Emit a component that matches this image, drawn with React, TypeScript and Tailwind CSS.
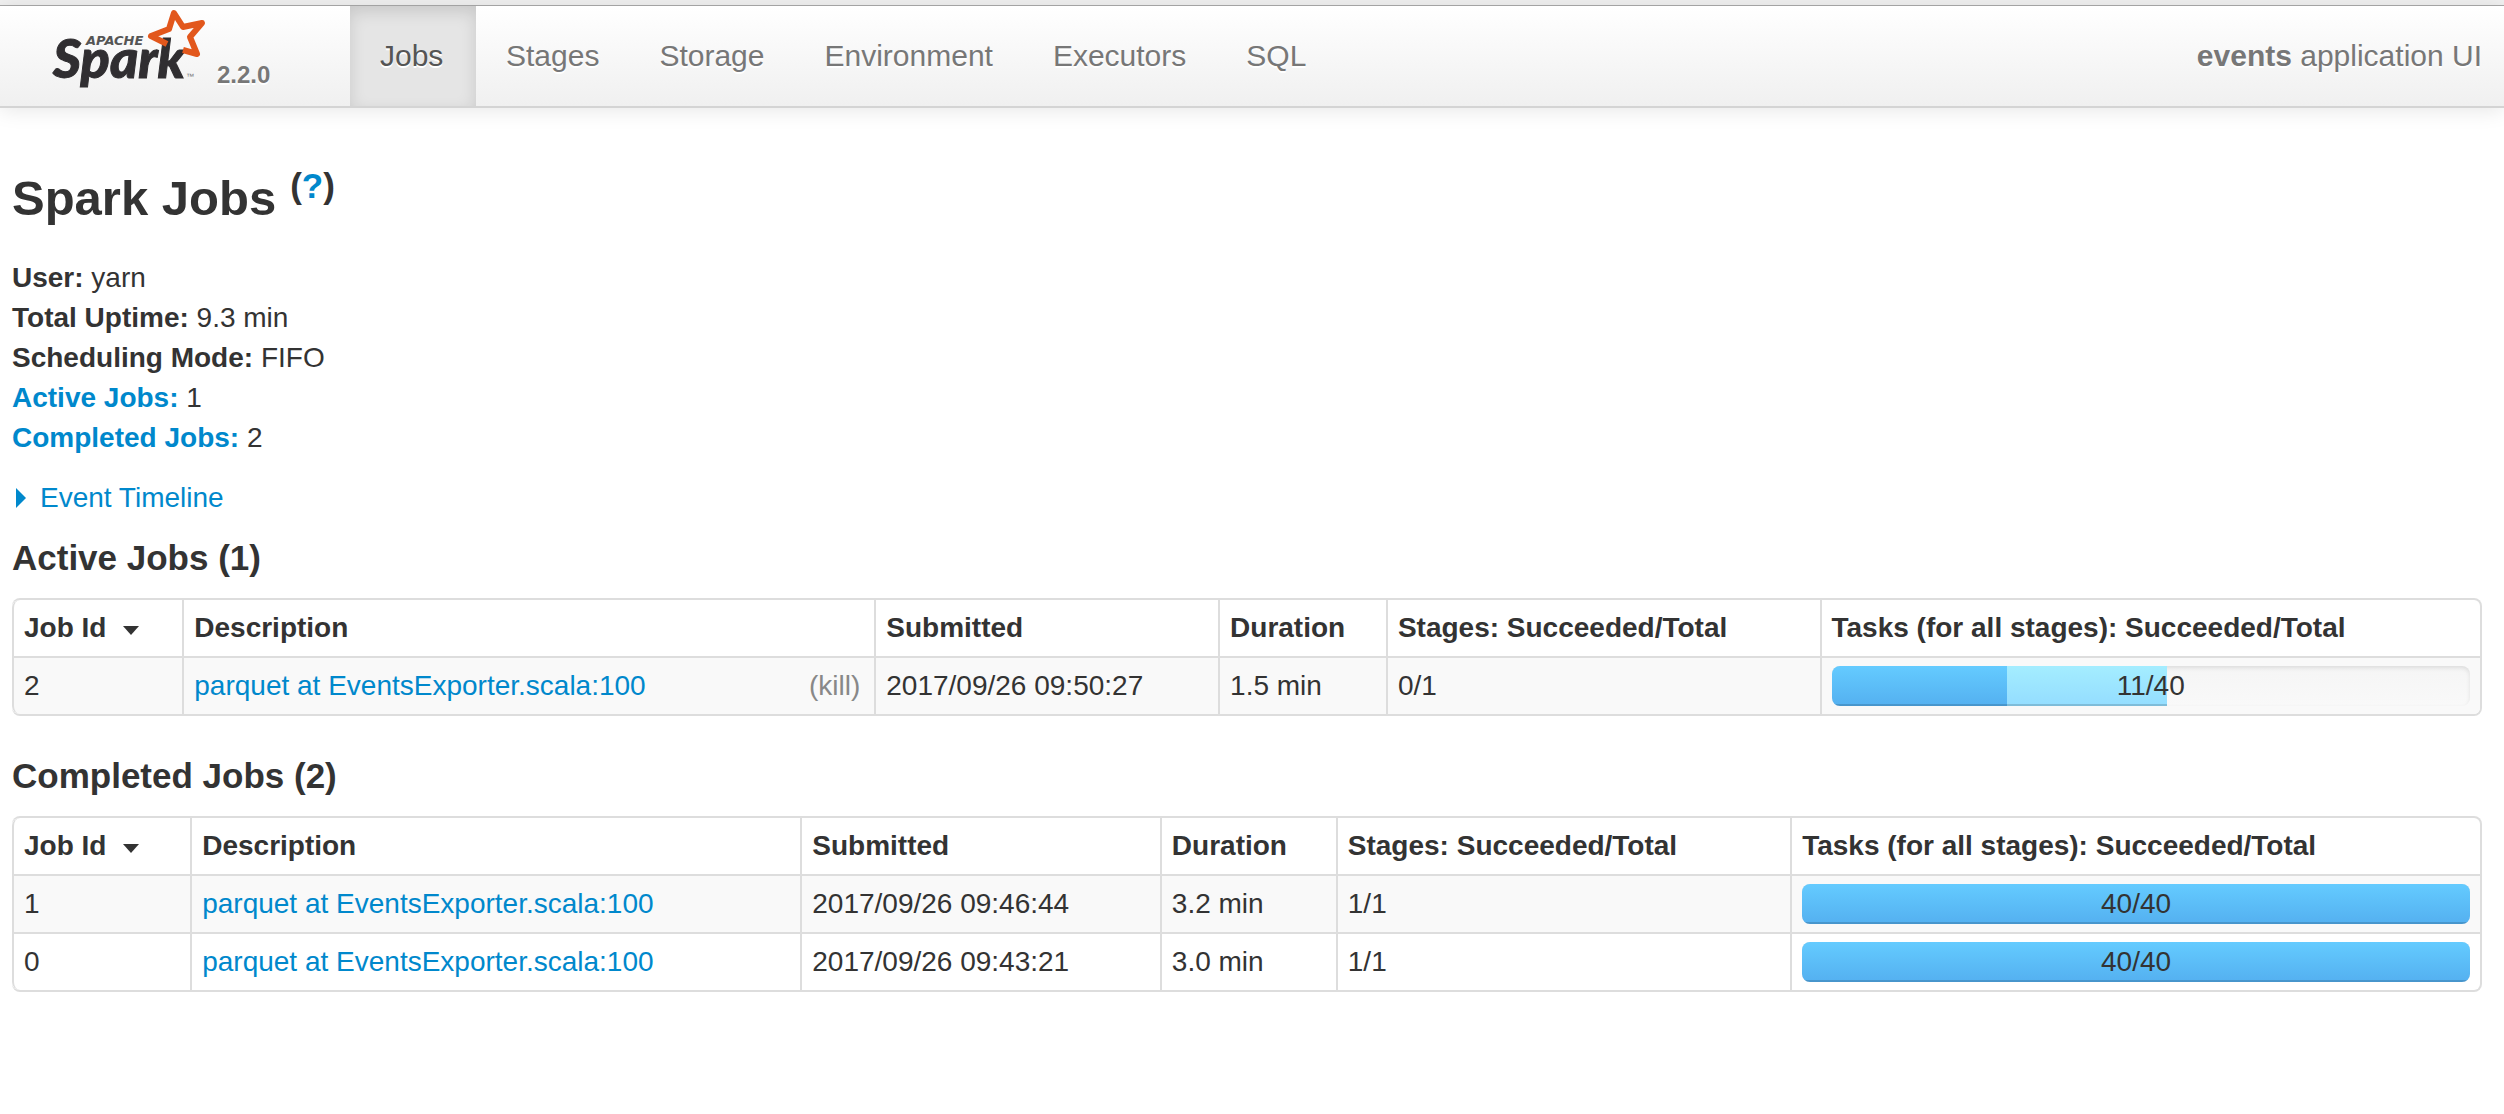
import React from "react";
import clsx from "clsx";

interface Job {
  id: number;
  description: string;
  submitted: string;
  duration: string;
  stages: string;
  succeeded: number;
  running: number;
  total: number;
  killable?: boolean;
}

const tabs = ["Jobs", "Stages", "Storage", "Environment", "Executors", "SQL"];

const activeJobs: Job[] = [
  {
    id: 2,
    description: "parquet at EventsExporter.scala:100",
    submitted: "2017/09/26 09:50:27",
    duration: "1.5 min",
    stages: "0/1",
    succeeded: 11,
    running: 10,
    total: 40,
    killable: true,
  },
];

const completedJobs: Job[] = [
  {
    id: 1,
    description: "parquet at EventsExporter.scala:100",
    submitted: "2017/09/26 09:46:44",
    duration: "3.2 min",
    stages: "1/1",
    succeeded: 40,
    running: 0,
    total: 40,
  },
  {
    id: 0,
    description: "parquet at EventsExporter.scala:100",
    submitted: "2017/09/26 09:43:21",
    duration: "3.0 min",
    stages: "1/1",
    succeeded: 40,
    running: 0,
    total: 40,
  },
];

// Column widths, in the order of the header cells. The last column takes the rest.
const activeCols = ["w-[6.9%]", "w-[28.04%]", "w-[13.93%]", "w-[6.8%]", "w-[17.57%]", ""];
const completedCols = ["w-[7.22%]", "w-[24.72%]", "w-[14.57%]", "w-[7.13%]", "w-[18.41%]", ""];

function SparkLogo() {
  return (
    <svg
      width="150"
      height="90"
      viewBox="0 0 150 90"
      role="img"
      aria-label="Apache Spark"
      className="overflow-visible [text-shadow:none]"
    >
      <text
        x="34"
        y="39"
        fill="#555"
        fontSize="13"
        fontWeight="700"
        fontStyle="italic"
        fontFamily="'DejaVu Sans', sans-serif"
      >
        APACHE
      </text>
      <text
        x="1"
        y="72"
        fill="#302e31"
        stroke="#302e31"
        strokeWidth="1"
        fontSize="54"
        fontWeight="900"
        fontStyle="italic"
        fontFamily="Lato, sans-serif"
      >
        Spark
      </text>
      <text x="134" y="73" fill="#777" fontSize="8" fontFamily="'Liberation Sans', sans-serif">
        ™
      </text>
      <path
        d="M115 38 L99 30 L117 23 L122 7 L131 21 L150 17 L138 31 L145 48 L131 44"
        fill="none"
        stroke="#e2571c"
        strokeWidth="6"
        strokeLinejoin="round"
      />
    </svg>
  );
}

function Navbar() {
  return (
    <header className="border-t border-[#aaa] mt-[5px]">
      <div className="flex items-stretch justify-between pr-[22px] bg-linear-to-b from-white to-[#f0f0f0] border-b-2 border-[#d4d4d4] shadow-[0_2px_20px_rgba(0,0,0,0.1)] text-[30px] leading-10 text-[#777] [text-shadow:0_2px_0_#fff]">
        <div className="flex">
          <a href="#" className="flex w-[350px] shrink-0 pl-[52px]">
            <SparkLogo />
            <span className="pt-[49px] pl-[15px] text-2xl leading-10 font-bold">2.2.0</span>
          </a>
          <nav className="flex">
            {tabs.map((tab) => (
              <a
                key={tab}
                href="#"
                className={clsx(
                  "min-w-[126px] px-[30px] py-[30px]",
                  tab === "Jobs" &&
                    "bg-[#e5e5e5] text-[#555] shadow-[inset_0_6px_16px_rgba(0,0,0,0.125)]"
                )}
              >
                {tab}
              </a>
            ))}
          </nav>
        </div>
        <p className="py-[30px]">
          <strong>events</strong> application UI
        </p>
      </div>
    </header>
  );
}

function ProgressBar({ job }: { job: Job }) {
  const donePct = (job.succeeded / job.total) * 100;
  const runningPct = (job.running / job.total) * 100;

  return (
    <div className="relative flex h-10 overflow-hidden rounded-lg bg-linear-to-b from-[#f5f5f5] to-[#f9f9f9] shadow-[inset_0_2px_4px_rgba(0,0,0,0.1)]">
      <div
        className="bg-linear-to-b from-[#64cbff] to-[#54b0f0] shadow-[inset_0_-2px_0_rgba(0,0,0,0.15)]"
        style={{ width: `${donePct}%` }}
      />
      <div
        className="bg-linear-to-b from-[#a4edff] to-[#94ddff] shadow-[inset_0_-2px_0_rgba(0,0,0,0.15)]"
        style={{ width: `${runningPct}%` }}
      />
      <span className="absolute inset-0 text-center">
        {job.succeeded}/{job.total}
      </span>
    </div>
  );
}

function JobTable({ jobs, cols }: { jobs: Job[]; cols: string[] }) {
  const cell = "border-l-2 border-[#ddd] px-[10px] py-2";

  return (
    <table className="w-full table-fixed border-separate border-spacing-0 overflow-hidden rounded-lg border-2 border-l-0 border-[#ddd] text-left">
      <colgroup>
        {cols.map((width, i) => (
          <col key={i} className={width} />
        ))}
      </colgroup>
      <thead>
        <tr>
          <th className={clsx(cell, "rounded-tl-lg")}>
            <span className="flex items-center gap-[17px]">
              Job Id
              <svg width="16" height="9" viewBox="0 0 16 9" className="mt-1" aria-hidden="true">
                <path d="M0 0H16L8 9Z" fill="#333" />
              </svg>
            </span>
          </th>
          <th className={cell}>Description</th>
          <th className={cell}>Submitted</th>
          <th className={cell}>Duration</th>
          <th className={cell}>Stages: Succeeded/Total</th>
          <th className={cell}>Tasks (for all stages): Succeeded/Total</th>
        </tr>
      </thead>
      <tbody>
        {jobs.map((job, i) => {
          const td = clsx(cell, "border-t-2", i % 2 === 0 && "bg-[#f9f9f9]");
          return (
            <tr key={job.id}>
              <td className={clsx(td, i === jobs.length - 1 && "rounded-bl-lg")}>{job.id}</td>
              <td className={td}>
                <div className="flex justify-between pr-1">
                  <a href="#" className="text-[#08c]">
                    {job.description}
                  </a>
                  {job.killable && (
                    <a href="#" className="text-[#888]">
                      (kill)
                    </a>
                  )}
                </div>
              </td>
              <td className={td}>{job.submitted}</td>
              <td className={td}>{job.duration}</td>
              <td className={td}>{job.stages}</td>
              <td className={td}>
                <ProgressBar job={job} />
              </td>
            </tr>
          );
        })}
      </tbody>
    </table>
  );
}

export default function App() {
  return (
    <div className="flow-root min-h-screen bg-[linear-gradient(#f0f0f0_5px,#fff_5px)] font-['Liberation_Sans',sans-serif] text-[28px] leading-10 text-[#333]">
      <Navbar />
      <main className="pl-3 pr-[22px] pt-[50px]">
        <h1 className="flex gap-[14px] text-[49px] leading-[80px] font-bold">
          Spark Jobs
          <span className="text-[35px] leading-[56px]">
            (
            <a href="#" className="text-[#08c]">
              ?
            </a>
            )
          </span>
        </h1>

        <ul className="mt-5">
          <li>
            <strong>User:</strong> yarn
          </li>
          <li>
            <strong>Total Uptime:</strong> 9.3 min
          </li>
          <li>
            <strong>Scheduling Mode:</strong> FIFO
          </li>
          <li>
            <a href="#active" className="font-bold text-[#08c]">
              Active Jobs:
            </a>{" "}
            1
          </li>
          <li>
            <a href="#completed" className="font-bold text-[#08c]">
              Completed Jobs:
            </a>{" "}
            2
          </li>
        </ul>

        <button type="button" className="mt-5 flex items-center gap-[14px] pl-1 text-[#08c]">
          <svg width="10" height="20" viewBox="0 0 10 20" aria-hidden="true">
            <path d="M0 0L10 10L0 20Z" fill="#08c" />
          </svg>
          Event Timeline
        </button>

        <section id="active" className="mt-5">
          <h2 className="mb-5 text-[35px] font-bold">Active Jobs (1)</h2>
          <JobTable jobs={activeJobs} cols={activeCols} />
        </section>

        <section id="completed" className="mt-10">
          <h2 className="mb-5 text-[35px] font-bold">Completed Jobs (2)</h2>
          <JobTable jobs={completedJobs} cols={completedCols} />
        </section>
      </main>
    </div>
  );
}
